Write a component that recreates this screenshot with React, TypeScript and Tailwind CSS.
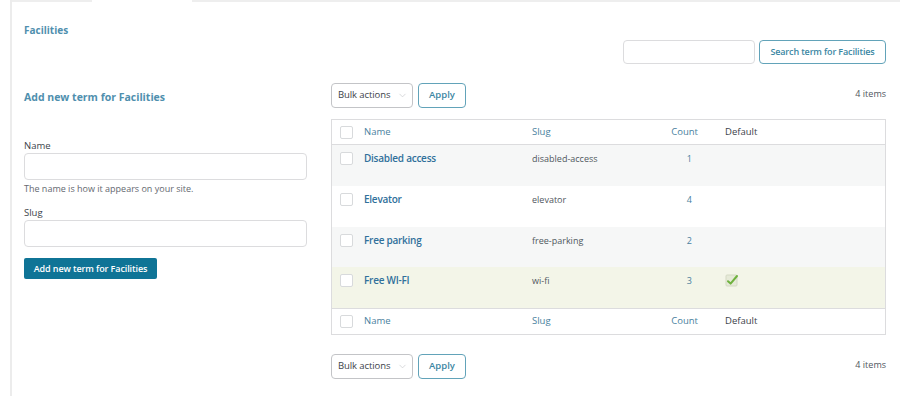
import { ChevronDown } from "lucide-react";

type Term = {
  name: string;
  slug: string;
  count: number;
  isDefault?: boolean;
  bg: string;
  h: string;
};

const terms: Term[] = [
  { name: "Disabled access", slug: "disabled-access", count: 1, bg: "bg-[#f6f7f7]", h: "h-[41px]" },
  { name: "Elevator", slug: "elevator", count: 4, bg: "bg-white", h: "h-[41px]" },
  { name: "Free parking", slug: "free-parking", count: 2, bg: "bg-[#f6f7f7]", h: "h-[40px]" },
  { name: "Free WI-FI", slug: "wi-fi", count: 3, isDefault: true, bg: "bg-[#f3f5e8]", h: "h-[41px]" },
];

function Checkbox() {
  return <span className="block h-[13px] w-[13px] rounded-[2px] border border-[#d8dadc] bg-white" />;
}

function DefaultMark() {
  return (
    <svg width="14" height="14" viewBox="0 0 14 14">
      <rect x="1" y="2" width="11" height="11" rx="1" fill="#e6ead8" stroke="#d4d9c4" />
      <path d="M3 8.2 L5.6 10.6 L12 3" fill="none" stroke="#6fb23f" strokeWidth="2" strokeLinecap="round" strokeLinejoin="round" />
    </svg>
  );
}

function BulkBar() {
  return (
    <div className="flex h-[25px] items-start">
      <div className="flex h-[25px] w-[82px] items-center justify-between whitespace-nowrap rounded-[4px] border border-[#c3c4c7] bg-white pl-[6px] pr-[4px] text-[9.5px] tracking-[-0.1px] text-[#3c434a]">
        <span>Bulk actions</span>
        <ChevronDown className="h-[11px] w-[11px] text-[#c8c9cc]" strokeWidth={1.5} />
      </div>
      <button
        type="button"
        className="ml-[5px] h-[25px] w-[48px] rounded-[4px] border border-[#62a3b9] bg-white text-[9.5px] font-semibold text-[#3b87a3]"
      >
        Apply
      </button>
      <span className="ml-auto mt-[4px] text-[9px] text-[#50575e]">4 items</span>
    </div>
  );
}

function HeaderRow({ top }: { top?: boolean }) {
  return (
    <div
      className={`flex items-center text-[9.5px] ${top ? "h-[25px] border-b" : "h-[26px] border-t"} border-[#dcdcde] bg-white`}
    >
      <div className="w-[32px] pl-[8px]">
        <Checkbox />
      </div>
      <div className="w-[168px] text-[#4a7f9e]">Name</div>
      <div className="w-[120px] text-[#4a7f9e]">Slug</div>
      <div className="w-[65px] pr-[19px] text-right text-[#4a7f9e]">Count</div>
      <div className="pl-[8px] text-[#3c434a]">Default</div>
    </div>
  );
}

export default function App() {
  return (
    <div
      className="h-[398px] w-[900px] overflow-hidden bg-white pl-[10px]"
      style={{ fontFamily: '"Open Sans", "Noto Sans", sans-serif' }}
    >
      <div className="relative h-[396px] border-l-2 border-[#ececec]">
        <div className="flex h-[2px]">
          <div className="w-[80px] bg-[#eeeeee]" />
          <div className="w-[100px]" />
          <div className="flex-1 bg-[#eeeeee]" />
        </div>

        <div className="pl-[12px] pr-[14px]">
          <h1 className="mt-[21px] h-[14px] text-[10px] font-bold leading-[14px] text-[#4f8fae]">Facilities</h1>

          <div className="mt-[3px] flex h-[24px] justify-end">
            <input className="h-[24px] w-[132px] rounded-[4px] border border-[#dcdcde] bg-white outline-none" />
            <button
              type="button"
              className="ml-[4px] h-[24px] w-[127px] whitespace-nowrap rounded-[4px] border border-[#62a3b9] bg-white text-[9px] font-semibold tracking-[-0.15px] text-[#3b87a3]"
            >
              Search term for Facilities
            </button>
          </div>

          <div className="mt-[19px] flex">
            <div className="w-[283px] pt-[7px]">
              <h2 className="h-[14px] text-[10.5px] font-bold leading-[14px] text-[#4f8fae]">Add new term for Facilities</h2>
              <label className="mt-[35px] block h-[13px] text-[9.5px] leading-[13px] text-[#3c434a]">Name</label>
              <input className="mt-[1px] block h-[27px] w-[283px] rounded-[4px] border border-[#dcdcde] bg-white outline-none" />
              <p className="mt-[2px] h-[13px] text-[9px] leading-[13px] text-[#646970]">The name is how it appears on your site.</p>
              <label className="mt-[11px] block h-[13px] text-[9.5px] leading-[13px] text-[#3c434a]">Slug</label>
              <input className="mt-[1px] block h-[27px] w-[283px] rounded-[4px] border border-[#dcdcde] bg-white outline-none" />
              <button
                type="button"
                className="mt-[11px] h-[21px] w-[133px] whitespace-nowrap rounded-[2px] bg-[#0f7496] text-[9px] font-semibold tracking-[-0.1px] text-white"
              >
                Add new term for Facilities
              </button>
            </div>

            <div className="ml-[24px] flex-1">
              <BulkBar />

              <div className="mt-[11px] border border-[#dcdcde]">
                <HeaderRow top />
                {terms.map((t) => (
                  <div key={t.slug} className={`flex ${t.h} items-start pt-[6px] ${t.bg}`}>
                    <div className="w-[32px] pl-[8px] pt-[1px]">
                      <Checkbox />
                    </div>
                    <div className="w-[168px] text-[10px] font-semibold tracking-[-0.25px] text-[#30709b]">{t.name}</div>
                    <div className="w-[120px] pt-[1px] text-[9px] text-[#50575e]">{t.slug}</div>
                    <div className="w-[65px] pr-[25px] pt-[1px] text-right text-[9px] text-[#4a7f9e]">{t.count}</div>
                    <div className="pl-[8px]">{t.isDefault && <DefaultMark />}</div>
                  </div>
                ))}
                <HeaderRow />
              </div>

              <div className="mt-[19px]">
                <BulkBar />
              </div>
            </div>
          </div>
        </div>
      </div>
    </div>
  );
}
